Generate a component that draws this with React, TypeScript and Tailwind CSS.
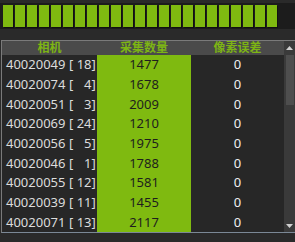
const rows = [
  { id: '40020049', idx: 18, count: 1477, err: 0 },
  { id: '40020074', idx: 4, count: 1678, err: 0 },
  { id: '40020051', idx: 3, count: 2009, err: 0 },
  { id: '40020069', idx: 24, count: 1210, err: 0 },
  { id: '40020056', idx: 5, count: 1975, err: 0 },
  { id: '40020046', idx: 1, count: 1788, err: 0 },
  { id: '40020055', idx: 12, count: 1581, err: 0 },
  { id: '40020039', idx: 11, count: 1455, err: 0 },
  { id: '40020071', idx: 13, count: 2117, err: 0 },
]

const segments = Array.from({ length: 23 }, (_, i) => i)

export default function App() {
  return (
    <div
      className="w-[295px] h-[242px] overflow-hidden bg-[#2a2a2a] text-[13px] leading-none"
      style={{ fontFamily: '"Segoe UI", "Noto Sans", "Noto Sans CJK SC", sans-serif' }}
    >
      {/* progress bar */}
      <div className="mt-[3px] h-[26px] bg-[#1c1c1c] flex gap-[2px] pl-[3px] pt-[2px]">
        {segments.map((i) => (
          <div key={i} className="w-[10px] h-[22px] bg-[#7fba10] shadow-[1px_1px_0_#111]" />
        ))}
      </div>

      {/* table */}
      <div className="mt-[11px] ml-[1px] h-[193px] border-l border-t border-b border-t-[#7a7a7a] border-l-[#7a7a7a] border-b-[#7b8896] flex">
        <div className="flex-1 flex flex-col">
          <div className="h-[14px] bg-[#4a4a4a] flex font-bold text-[#7db414] text-[12px]">
            <div className="w-[95px] text-center leading-[14px]">相机</div>
            <div className="w-[94px] text-center leading-[14px]">采集数量</div>
            <div className="flex-1 text-center leading-[14px]">像素误差</div>
          </div>
          <div className="flex-1 bg-[#272727] flex flex-col">
            {rows.map((r) => (
              <div key={r.id} className="h-[19.7px] flex items-center">
                <div className="w-[95px] pl-[4px] text-[#dcdcdc] whitespace-pre">
                  {r.id}
                  {' [ '}
                  <span className="inline-block w-[15px] text-right">{r.idx}</span>
                  {']'}
                </div>
                <div className="w-[94px] h-full bg-[#7fba10] text-[#1e1e1e] flex items-center justify-center">
                  {r.count}
                </div>
                <div className="flex-1 text-center text-[#f0f0f0]">{r.err}</div>
              </div>
            ))}
          </div>
        </div>
        {/* scrollbar */}
        <div className="w-[11px] bg-[#3a3a3a] flex flex-col items-center">
          <div className="h-[14px] flex items-center justify-center">
            <svg width="7" height="4" viewBox="0 0 7 4"><path d="M3.5 0L7 4H0z" fill="#d0d0d0" /></svg>
          </div>
          <div className="w-[8px] h-[50px] bg-[#4e4e4e]" />
          <div className="flex-1" />
          <div className="h-[12px] flex items-center justify-center">
            <svg width="7" height="4" viewBox="0 0 7 4"><path d="M0 0H7L3.5 4z" fill="#d0d0d0" /></svg>
          </div>
        </div>
      </div>
    </div>
  )
}
